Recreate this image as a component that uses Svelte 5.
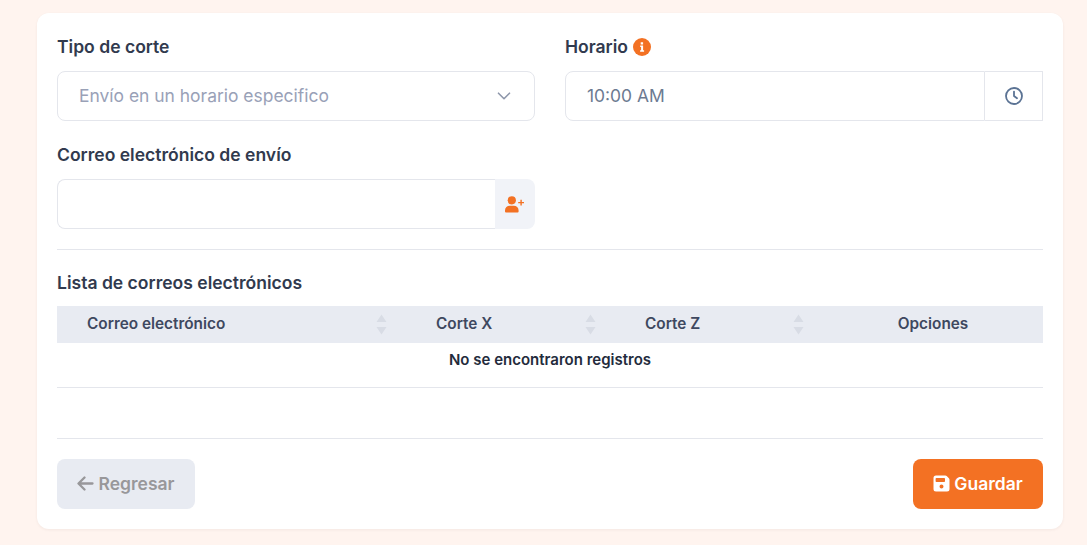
<script>
  const cols = [
    { name: 'Correo electrónico', sort: true },
    { name: 'Corte X', sort: true },
    { name: 'Corte Z', sort: true },
    { name: 'Opciones', sort: false }
  ];
</script>

<main class="page">
  <section class="card">
    <div class="form">
      <div class="field">
        <span class="label">Tipo de corte</span>
        <div class="select">
          <span>Envío en un horario especifico</span>
          <svg width="16" height="16" viewBox="0 0 16 16" fill="none" stroke="#8e97ab" stroke-width="1.6" stroke-linecap="round" stroke-linejoin="round"><path d="M2.5 5.2 8 10.7l5.5-5.5"/></svg>
        </div>
      </div>
      <div class="field">
        <span class="label">Horario
          <svg class="info" width="18" height="18" viewBox="0 0 18 18"><circle cx="9" cy="9" r="9" fill="#f37123"/><path fill="#fff" d="M7.7 4.3h2.4v2.1H7.7zM7.2 7.6h2.9v4.6h1v1.5H7.1v-1.5h1v-3.1h-.9z"/></svg>
        </span>
        <div class="time">
          <span class="time-value">10:00 AM</span>
          <span class="time-addon">
            <svg width="20" height="20" viewBox="0 0 20 20" fill="none" stroke="#5b7394" stroke-width="1.8" stroke-linecap="round" stroke-linejoin="round"><circle cx="10" cy="10" r="8"/><path d="M10 5.6V10l3 2.2"/></svg>
          </span>
        </div>
      </div>
      <div class="field">
        <span class="label">Correo electrónico de envío</span>
        <div class="mail">
          <span class="mail-input"></span>
          <span class="mail-addon">
            <svg width="20" height="17" viewBox="0 0 20 17" fill="#f37123"><circle cx="6.800" cy="4.300" r="4.100"/><path d="M4.800 9.700h4a4.800 4.800 0 0 1 4.800 4.800v1a1 1 0 0 1-1 1H1a1 1 0 0 1-1-1v-1a4.800 4.800 0 0 1 4.800-4.800z"/><path d="M15.400 3.700h1.400v2.200H19v1.400h-2.200v2.200h-1.400V7.300h-2.200V5.900h2.200z"/></svg>
          </span>
        </div>
      </div>
    </div>

    <hr class="rule first" />

    <h2 class="label list-title">Lista de correos electrónicos</h2>

    <table>
      <colgroup>
        <col class="c1" /><col class="c2" /><col class="c3" /><col class="c4" />
      </colgroup>
      <thead>
        <tr>
          {#each cols as col}
            <th class:center={!col.sort}>
              {col.name}
              {#if col.sort}
                <svg class="sort" width="11" height="21" viewBox="0 0 11 21" fill="#d8dce5"><path d="M5.500 0.500 10.500 8H.5zM.5 13h10l-5 7.500z"/></svg>
              {/if}
            </th>
          {/each}
        </tr>
      </thead>
      <tbody>
        <tr><td colspan="4">No se encontraron registros</td></tr>
      </tbody>
    </table>

    <hr class="rule last" />

    <footer>
      <button class="btn back">
        <svg width="17" height="15" viewBox="0 0 17 15" fill="none" stroke="#98979a" stroke-width="2.300" stroke-linecap="round" stroke-linejoin="round"><path d="M7.500 1.500 1.500 7.500l6 6M2 7.500h13.500"/></svg>
        Regresar
      </button>
      <button class="btn save">
        <svg width="17" height="17" viewBox="0 0 17 17"><path fill="#fff" fill-rule="evenodd" d="M3 .5h9.300a2 2 0 0 1 1.400.6l2.200 2.200a2 2 0 0 1 .6 1.400V14a2.500 2.500 0 0 1-2.500 2.500H3A2.500 2.500 0 0 1 .5 14V3A2.500 2.500 0 0 1 3 .5zM3.400 3a.8.8 0 0 0-.8.8v2.400a.8.8 0 0 0 .8.8h7.800a.8.8 0 0 0 .8-.8V3.800a.8.800 0 0 0-.8-.8zM8.500 9.500a2 2 0 1 0 0 4 2 2 0 0 0 0-4z"/></svg>
        Guardar
      </button>
    </footer>
  </section>
</main>

<style>
  :global(body) {
    margin: 0;
    background: #fff4ef;
    font-family: Inter, "Liberation Sans", sans-serif;
  }
  .page {
    height: 545px;
    padding: 13px 24px 16px 37px;
    box-sizing: border-box;
    overflow: hidden;
  }
  .card {
    background: #fff;
    border-radius: 12px;
    padding: 20px;
    height: 516px;
    box-sizing: border-box;
    box-shadow: 0 1px 3px rgba(60, 40, 30, 0.06);
  }
  .form {
    display: grid;
    grid-template-columns: 478px 478px;
    column-gap: 30px;
    row-gap: 20px;
  }
  .field {
    display: flex;
    flex-direction: column;
    gap: 12px;
  }
  .label {
    font-size: 17.55px;
    font-weight: 600;
    line-height: 24px;
    height: 24px;
    margin-top: 2px;
    color: #313a4e;
    margin-bottom: 0;
    display: flex;
    align-items: center;
    gap: 5px;
  }
  .select, .time, .mail {
    height: 50px;
    box-sizing: border-box;
    font-size: 17.45px;
    line-height: 24px;
    display: flex;
  }
  .select {
    border: 1px solid #e4e6ec;
    border-radius: 8px;
    align-items: center;
    justify-content: space-between;
    padding: 0 22px 0 21px;
    color: #99a1b7;
  }
  .time-value {
    flex: 1;
    border: 1px solid #e4e6ec;
    border-radius: 8px 0 0 8px;
    padding: 0 20px 0 21px;
    display: flex;
    align-items: center;
    color: #6c7a91;
  }
  .time-addon {
    width: 58px;
    box-sizing: border-box;
    border: 1px solid #e4e6ec;
    border-left: 0;
    display: flex;
    align-items: center;
    justify-content: center;
  }
  .mail-input {
    flex: 1;
    border: 1px solid #e4e6ec;
    border-right: 0;
    border-radius: 8px 0 0 8px;
  }
  .mail-addon {
    width: 40px;
    background: #f1f3f8;
    border-radius: 0 8px 8px 0;
    display: flex;
    align-items: center;
    justify-content: center;
  }
  .rule {
    border: 0;
    border-top: 1px solid #e4e6ec;
    margin: 0;
  }
  .rule.first { margin-top: 20px; }
  .list-title { margin: 21px 0 11px; }
  table {
    width: 986px;
    table-layout: fixed;
    border-collapse: collapse;
  }
  .c1 { width: 349px; }
  .c2 { width: 209px; }
  .c3 { width: 208px; }
  .c4 { width: 220px; }
  th {
    position: relative;
    background: #e8ebf2;
    height: 37px;
    padding: 0 0 2px 30px;
    text-align: left;
    font-size: 15.35px;
    font-weight: 600;
    color: #3e4860;
    box-sizing: border-box;
  }
  th.center {
    text-align: center;
    padding: 0 0 2px;
  }
  .sort {
    position: absolute;
    right: 19px;
    top: 8px;
  }
  td {
    height: 44px;
    box-sizing: border-box;
    padding: 8px 0 0;
    vertical-align: top;
    text-align: center;
    font-size: 15px;
    font-weight: 600;
    line-height: 18px;
    color: #232b3c;
    border-bottom: 1px solid #e4e6ec;
  }
  .rule.last { margin-top: 50px; }
  footer {
    display: flex;
    justify-content: space-between;
    margin-top: 20px;
  }
  .btn {
    height: 50px;
    border: 0;
    border-radius: 8px;
    font-family: inherit;
    font-size: 17.5px;
    font-weight: 600;
    display: flex;
    align-items: center;
    justify-content: center;
    gap: 4px;
    padding: 0;
  }
  .back {
    width: 138px;
    background: #e8ebf2;
    color: #98979a;
  }
  .save {
    width: 130px;
    background: #f37123;
    color: #fff;
  }
</style>
